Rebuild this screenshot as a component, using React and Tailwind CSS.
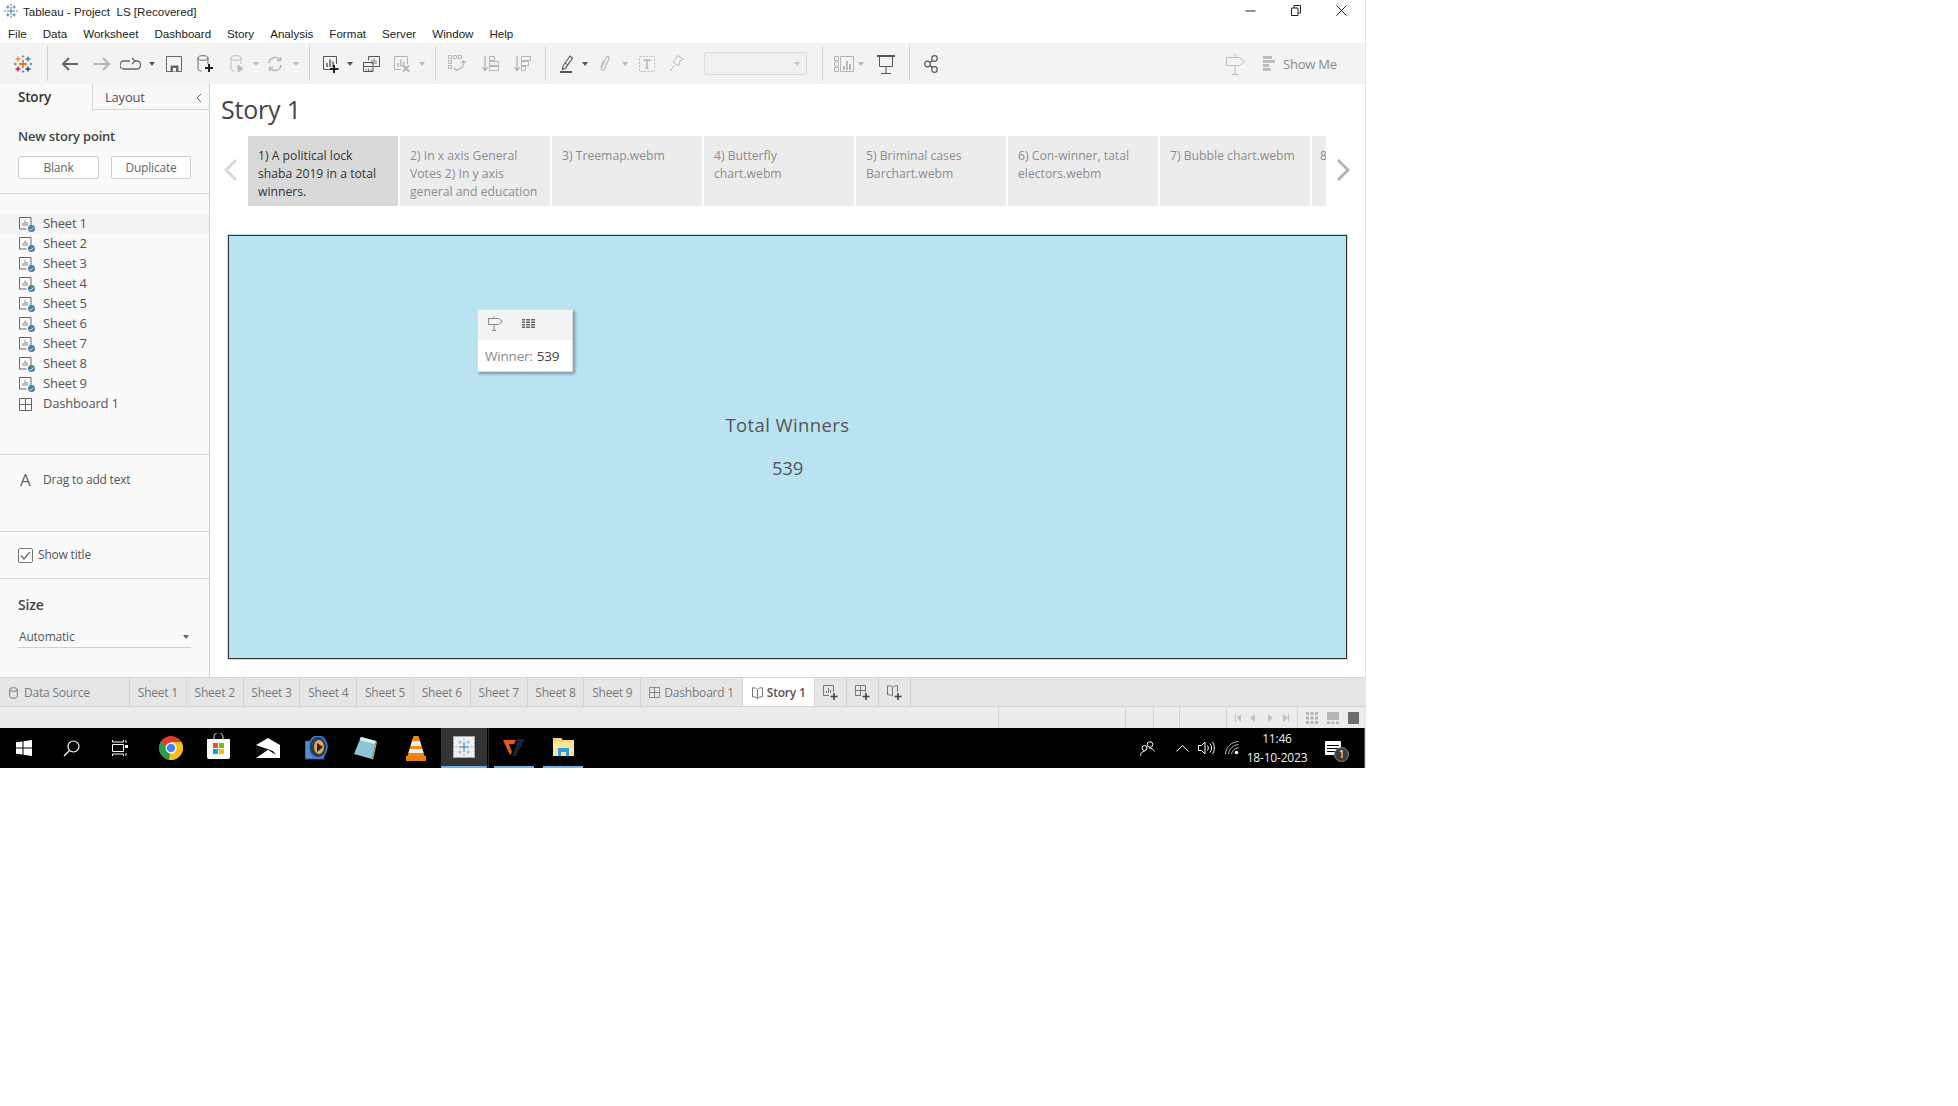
const menuItems = ['File', 'Data', 'Worksheet', 'Dashboard', 'Story', 'Analysis', 'Format', 'Server', 'Window', 'Help'];
const sheets = ['Sheet 1', 'Sheet 2', 'Sheet 3', 'Sheet 4', 'Sheet 5', 'Sheet 6', 'Sheet 7', 'Sheet 8', 'Sheet 9'];

const storyPoints = [
  { text: '1) A political lock\nshaba 2019 in a total\nwinners.', active: true },
  { text: '2) In x axis General\nVotes 2) In y axis\ngeneral and education' },
  { text: '3) Treemap.webm' },
  { text: '4) Butterfly\nchart.webm' },
  { text: '5) Briminal cases\nBarchart.webm' },
  { text: '6) Con-winner, tatal\nelectors.webm' },
  { text: '7) Bubble chart.webm' },
];

// Toolbar bits
const Caret = ({ className = '', color = '#555' }) => (
  <svg width="6" height="4" viewBox="0 0 6 4" className={className}>
    <path d="M0 0h6L3 4z" fill={color} />
  </svg>
);

const Divider = ({ className = '' }) => <div className={`w-px h-[35px] bg-[#d4d4d4] shrink-0 ${className}`} />;

const TableauLogo = ({ className = '' }) => (
  <svg width="18" height="18" viewBox="0 0 18 18" className={className} strokeWidth="1.4" fill="none">
    <path d="M9 5v8M5 9h8" stroke="#e8762b" strokeWidth="1.8" />
    <path d="M4 1.500v5M1.500 4h5" stroke="#f28e2b" />
    <path d="M14 1.500v5M11.500 4h5" stroke="#4e79a7" />
    <path d="M4 11.500v5M1.500 14h5" stroke="#c72035" />
    <path d="M14 11.500v5M11.500 14h5" stroke="#1f447a" />
    <path d="M9 0v3M7.700 1.500h2.600" stroke="#7c9cbf" strokeWidth="1" />
    <path d="M9 15v3M7.700 16.500h2.600" stroke="#6b8db3" strokeWidth="1" />
    <path d="M1 7.700v2.600M0 9h3" stroke="#59879b" strokeWidth="1" />
    <path d="M17 7.700v2.600M15.500 9h2.500" stroke="#59879b" strokeWidth="1" />
  </svg>
);

const ArrowIcon = ({ flip, color, className = '' }) => (
  <svg width="18" height="16" viewBox="0 0 18 16" fill="none" stroke={color} strokeWidth="2" className={className}>
    {flip ? <path d="M1 8h15M10 2l6 6-6 6" /> : <path d="M17 8H2M8 2L2 8l6 6" />}
  </svg>
);

const SheetGlyph = ({ color = '#555' }) => (
  <>
    <path d="M14.500 9V1.500h-13v13H8" stroke={color} fill="none" />
    <path d="M5 12V8M8 12V4.500M11 12V6.500" stroke={color} fill="none" strokeWidth="1.400" />
  </>
);

const SideSheetIcon = () => (
  <span className="relative w-[14px] h-[14px] shrink-0">
    <svg width="13" height="13" viewBox="0 0 13 13" fill="none" stroke="#666">
      <path d="M.5.500h11.500v8M.5.500V12h7" />
      <path d="M4 9V6M6 9V3.500M8 9V5" strokeWidth=".8" />
    </svg>
    <span className="absolute right-[-2px] bottom-[-1px] w-[7px] h-[7px] rounded-full bg-[#3f84a3] flex items-center justify-center">
      <svg width="5" height="4" viewBox="0 0 5 4" fill="none" stroke="#fff" strokeWidth=".8"><path d="M.5 2l1.300 1.300L4.500.5" /></svg>
    </span>
  </span>
);

const GridIcon = ({ color = '#666', size = 13 }) => (
  <svg width={size} height={size} viewBox="0 0 13 13" fill="none" stroke={color}>
    <path d="M.5.500h12v12H.5zM6.500.500v12M.5 6.500h12" />
  </svg>
);

const BookIcon = ({ color = '#666' }) => (
  <svg width="11" height="12" viewBox="0 0 11 12" fill="none" stroke={color} strokeWidth=".9">
    <path d="M5.500 2.500C4.500 1 2.500.8.500.8v9c2 0 4 .2 5 1.700 1-1.500 3-1.700 5-1.700v-9c-2 0-4 .2-5 1.700zM5.500 2.500v9" />
  </svg>
);

const Toolbar = () => (
  <div className="h-[41px] bg-[#f3f3f3] flex items-center shrink-0 pr-[28px]">
    <TableauLogo className="ml-[14px] shrink-0" />
    <Divider className="ml-[15px]" />
    <ArrowIcon color="#666" className="ml-[13px] shrink-0" />
    <ArrowIcon flip color="#b5b5b5" className="ml-[14px] shrink-0" />
    <svg width="24" height="14" viewBox="0 0 24 14" fill="none" stroke="#666" strokeWidth="1.300" className="ml-[9px] shrink-0">
      <path d="M10 4H4a3.500 3.500 0 0 0 0 8h13a3.500 3.500 0 0 0 3.500-3.500V7.500A3.500 3.500 0 0 0 17 4h-3" />
      <path d="M12 1l3 3-3 3" />
    </svg>
    <Caret className="ml-[5px] shrink-0" />
    <svg width="16" height="16" viewBox="0 0 16 16" fill="none" stroke="#666" className="ml-[11px] shrink-0">
      <path d="M.5.500h15v15H.5z" />
      <path d="M5 15.500V10h7v5.500z" fill="#666" />
      <path d="M7 12h3v3.500H7z" fill="#f3f3f3" stroke="none" />
    </svg>
    <svg width="17" height="18" viewBox="0 0 17 18" fill="none" stroke="#666" className="ml-[15px] shrink-0">
      <ellipse cx="6" cy="3" rx="5" ry="2.300" />
      <path d="M1 3v11c0 1 1.500 2 3.500 2M11 3v6" />
      <path d="M12 9v8M8 13h8" stroke="#222" strokeWidth="2" />
    </svg>
    <svg width="14" height="18" viewBox="0 0 14 18" fill="none" stroke="#bbb" className="ml-[16px] shrink-0">
      <ellipse cx="6" cy="3" rx="5" ry="2.300" />
      <path d="M1 3v11c0 1 1.500 2 3.500 2M11 3v6" />
      <path d="M8 10v7l5-3.500z" fill="#bbb" />
    </svg>
    <Caret color="#bbb" className="ml-[9px] shrink-0" />
    <svg width="16" height="16" viewBox="0 0 16 16" fill="none" stroke="#b5b5b5" strokeWidth="1.400" className="ml-[8px] shrink-0">
      <path d="M2 7a6 6 0 0 1 10.500-3.500M14 9a6 6 0 0 1-10.500 3.500" />
      <path d="M13.500 1v3.500H10M2.500 15v-3.500H6" />
    </svg>
    <Caret color="#bbb" className="ml-[10px] shrink-0" />
    <Divider className="ml-[10px]" />
    <svg width="17" height="18" viewBox="0 0 17 18" fill="none" className="ml-[12px] shrink-0">
      <SheetGlyph />
      <path d="M12 10v8M8 14h8.500" stroke="#222" strokeWidth="2" />
    </svg>
    <Caret className="ml-[8px] shrink-0" />
    <svg width="17" height="16" viewBox="0 0 17 16" fill="none" stroke="#555" className="ml-[10px] shrink-0">
      <path d="M5.500 4.500V.5h11v10h-6" />
      <path d="M.5 6.500h9.500v9H.5zM.5 10.500h9.500" />
      <path d="M9 8V4M11 8V2.500M13 8V4.500M3 15v-2M5.500 15v-2.500M8 15v-2" strokeWidth=".8" />
    </svg>
    <svg width="17" height="17" viewBox="0 0 17 17" fill="none" className="ml-[13px] shrink-0">
      <SheetGlyph color="#b5b5b5" />
      <path d="M10 10.500l6 6M16 10.500l-6 6" stroke="#b5b5b5" strokeWidth="2" />
    </svg>
    <Caret color="#bbb" className="ml-[9px] shrink-0" />
    <Divider className="ml-[10px]" />
    <svg width="18" height="17" viewBox="0 0 18 17" fill="none" stroke="#b5b5b5" className="ml-[12px] shrink-0">
      <path d="M.5.500h3v3h-3zM5.500.500h3v3h-3zM10.500.500h3v3h-3zM.5 5.500h3v3h-3zM.5 10.500h3v3h-3z" />
      <path d="M15.500 6c1 4-1 8-7 9M6 13l2.500 2.500L11 14M13 8l2.500-2 2 2" strokeWidth="1.200" />
    </svg>
    <svg width="17" height="17" viewBox="0 0 17 17" fill="none" stroke="#b5b5b5" className="ml-[16px] shrink-0">
      <path d="M3 1v14M.5 12.500L3 15.500l2.500-3" strokeWidth="1.300" />
      <path d="M7.500 1.500h5v4h-5zM7.500 6.500h9v4h-9zM7.500 11.500h9v4h-9z" />
    </svg>
    <svg width="17" height="17" viewBox="0 0 17 17" fill="none" stroke="#b5b5b5" className="ml-[15px] shrink-0">
      <path d="M3 1v14M.5 12.500L3 15.500l2.500-3" strokeWidth="1.300" />
      <path d="M7.500 1.500h9v4h-9zM7.500 6.500h7v4h-7zM7.500 11.500h4v4h-4z" />
    </svg>
    <Divider className="ml-[14px]" />
    <svg width="14" height="18" viewBox="0 0 14 18" fill="none" stroke="#555" className="ml-[14px] shrink-0">
      <path d="M3 11l7-10 2.500 2-7 10-3 1.500z" strokeWidth="1.100" />
      <path d="M5 8l3 2" />
      <path d="M0 17h12" strokeWidth="2" />
    </svg>
    <Caret className="ml-[8px] shrink-0" />
    <svg width="14" height="18" viewBox="0 0 14 18" fill="none" stroke="#bbb" strokeWidth="1.200" className="ml-[10px] shrink-0">
      <path d="M5 6L3 13c-.5 2 2.500 3.500 3.500 1L11 3.500C11.800 1.500 9 .5 8 2.500L3.500 13" />
    </svg>
    <Caret color="#bbb" className="ml-[10px] shrink-0" />
    <svg width="16" height="16" viewBox="0 0 16 16" fill="none" stroke="#bbb" className="ml-[11px] shrink-0">
      <path d="M.5.500h15v15H.5z" strokeDasharray="2 1.500" />
      <path d="M5 5V4h6v1M8 4v8M6.500 12h3" stroke="#999" />
    </svg>
    <svg width="14" height="17" viewBox="0 0 14 17" fill="none" stroke="#bbb" className="ml-[15px] shrink-0">
      <path d="M7.500.5l6 4-3.500 1-1 5-2-.5-4-3 1.500-1.500zM4.500 10L.5 16" />
    </svg>
    <div className="ml-[20px] w-[103px] h-[23px] shrink-0 border border-[#dcdcdc] rounded-[2px] bg-[#f0f0f0] flex items-center justify-end pr-[6px]">
      <Caret color="#c4c4c4" />
    </div>
    <Divider className="ml-[15px]" />
    <svg width="20" height="18" viewBox="0 0 20 18" fill="none" stroke="#b5b5b5" className="ml-[11px] shrink-0">
      <path d="M.5 1.500h4v4h-4zM.5 7h4v4h-4zM.5 12.500h4v4h-4zM6.500 1.500h13v15h-13z" />
      <path d="M10 15v-4M13 15V6M16 15V9" stroke="#999" strokeWidth="1.300" />
    </svg>
    <Caret color="#bbb" className="ml-[4px] shrink-0" />
    <svg width="18" height="20" viewBox="0 0 18 20" fill="none" stroke="#555" className="ml-[13px] shrink-0">
      <path d="M0 2h18" strokeWidth="2" />
      <path d="M2.500 2v10.500h13V2M9 12.500V19M4 19.500h10" />
    </svg>
    <Divider className="ml-[14px]" />
    <svg width="14" height="18" viewBox="0 0 14 18" fill="none" stroke="#555" strokeWidth="1.200" className="ml-[14px] shrink-0">
      <circle cx="3.500" cy="9" r="2.800" />
      <circle cx="10.500" cy="3.500" r="2.800" />
      <circle cx="10.500" cy="14.500" r="2.800" />
      <path d="M6 7.500l2.500-2M6 10.500l2.500 2" />
    </svg>
    <svg width="19" height="22" viewBox="0 0 19 22" fill="none" stroke="#bdbdbd" className="ml-auto shrink-0">
      <path d="M.5 4.500h13l5 4-5 4H.5zM9 .5v4M9 12.500v9M5.500 21.500h7" />
    </svg>
    <svg width="12" height="16" viewBox="0 0 12 16" className="ml-[18px] shrink-0" fill="#bdbdbd">
      <path d="M0 0h9v3H0zM0 4h12v3H0zM0 8h6v3H0zM0 12h8v3H0z" />
    </svg>
    <span className="ml-[8px] w-[54px] pt-[2px] text-[13px] text-[#8a8a8a] whitespace-nowrap tracking-[-0.2px]">Show Me</span>
  </div>
);

const StoryPanel = () => (
  <aside className="w-[210px] shrink-0 bg-[#fafafa] border-r border-[#cfcfcf] flex flex-col text-[#555]">
    <div className="h-[26px] flex text-[13px] shrink-0">
      <div className="w-[92px] pl-[18px] pt-[3px] text-[13.500px] font-semibold text-[#333]">Story</div>
      <div className="flex-1 border-l border-b border-[#d4d4d4] bg-[#f8f8f8] flex items-center justify-between pl-[12px] pr-[7px] pt-[2px]">
        <span>Layout</span>
        <svg width="6" height="10" viewBox="0 0 6 10" fill="none" stroke="#666"><path d="M5 1L1 5l4 4" /></svg>
      </div>
    </div>
    <div className="h-[84px] shrink-0 border-b border-[#d4d4d4] px-[18px] pt-[18px]">
      <div className="text-[13px] font-semibold text-[#444] leading-[17px]">New story point</div>
      <div className="flex justify-between w-[173px] mt-[11px]">
        <button className="w-[81px] h-[23px] border border-[#cfcfcf] rounded-[2px] bg-white text-[12px] text-[#666]">Blank</button>
        <button className="w-[80px] h-[23px] border border-[#cfcfcf] rounded-[2px] bg-white text-[12px] text-[#666]">Duplicate</button>
      </div>
    </div>
    <div className="h-[261px] shrink-0 border-b border-[#d4d4d4] pt-[20px]">
      {sheets.map((s, i) => (
        <div key={s} className={`h-[20px] flex items-center pl-[19px] gap-[10px] text-[13px] ${i === 0 ? 'bg-[#f3f3f3]' : ''}`}>
          <SideSheetIcon />
          <span>{s}</span>
        </div>
      ))}
      <div className="h-[20px] flex items-center pl-[19px] gap-[11px] text-[13px]">
        <GridIcon />
        <span>Dashboard 1</span>
      </div>
    </div>
    <div className="h-[77px] shrink-0 border-b border-[#d4d4d4] pt-[14px] pl-[20px] flex items-start gap-[12px]">
      <span className="text-[17px] leading-[22px] w-[11px] text-[#666]">A</span>
      <span className="text-[12px] leading-[22px]">Drag to add text</span>
    </div>
    <div className="h-[47px] shrink-0 border-b border-[#d4d4d4] pl-[18px] flex items-center gap-[5px]">
      <span className="w-[15px] h-[15px] border border-[#777] rounded-[2px] bg-white flex items-center justify-center">
        <svg width="11" height="9" viewBox="0 0 11 9" fill="none" stroke="#666" strokeWidth="1.200"><path d="M1 4.500L4 8l6-7" /></svg>
      </span>
      <span className="text-[12px]">Show title</span>
    </div>
    <div className="flex-1 pl-[18px] pt-[17px]">
      <div className="text-[14px] font-semibold text-[#444] leading-[18px]">Size</div>
      <div className="w-[173px] h-[24px] mt-[10px] pt-[2px] border-b border-[#cfcfcf] flex items-center justify-between pl-[1px] pr-[2px]">
        <span className="text-[12px]">Automatic</span>
        <Caret color="#666" />
      </div>
    </div>
  </aside>
);

const StoryNav = () => (
  <div className="flex items-center h-[70px] mt-[15px]">
    <div className="w-[38px] shrink-0 flex justify-end pr-[10px] mb-[2px]">
      <svg width="14" height="24" viewBox="0 0 14 24" fill="none" stroke="#d8d8d8" strokeWidth="3"><path d="M12 2L2 12l10 10" /></svg>
    </div>
    <div className="flex gap-[2px] w-[1078px] overflow-hidden shrink-0">
      {storyPoints.map(p => (
        <div
          key={p.text}
          className={`w-[150px] h-[70px] shrink-0 pl-[10px] pt-[11px] text-[12.200px] tracking-normal leading-[18px] whitespace-pre-line overflow-hidden ${
            p.active ? 'bg-[#d9d9d9] text-[#333]' : 'bg-[#ececec] text-[#8c8c8c]'
          }`}
        >
          {p.text}
        </div>
      ))}
      <div className="w-[15px] h-[70px] shrink-0 bg-[#ececec] pl-[8px] pt-[11px] text-[12.200px] leading-[18px] text-[#8c8c8c] overflow-hidden">8</div>
    </div>
    <div className="pl-[10px] mb-[2px]">
      <svg width="14" height="24" viewBox="0 0 14 24" fill="none" stroke="#b5b5b5" strokeWidth="3"><path d="M2 2l10 10L2 22" /></svg>
    </div>
  </div>
);

const StoryCanvas = () => (
  <div className="relative ml-[17px] mt-[28px] w-[1121px] h-[426px] bg-[#bae3f2] p-px">
    <div className="w-full h-full border border-[#333] flex flex-col items-center pt-[177px] text-[#555]">
      <div className="text-[18.500px] leading-[24px] tracking-[0.4px]">Total Winners</div>
      <div className="text-[18.500px] leading-[24px] mt-[19px]">539</div>
    </div>
    {/* hover tooltip */}
    <div className="absolute left-[250px] top-[75px] w-[96px] h-[63px] bg-white shadow-[2px_2px_3px_rgba(0,0,0,0.35)] border border-[#ddd]">
      <div className="h-[30px] bg-[#f3f3f3] flex items-center pl-[10px] pb-[3px] gap-[19px]">
        <svg width="15" height="15" viewBox="0 0 15 15" fill="none" stroke="#888"><path d="M.5 2.500h10l4 3-4 3H.5zM6 .5v2M6 8.500v6M4 14.500h4" /></svg>
        <svg width="13" height="9" viewBox="0 0 13 9" fill="#666"><path d="M0 0h3v1.500H0zM4 0h4v1.500H4zM9 0h4v1.500H9zM0 2.500h3V4H0zM4 2.500h4V4H4zM9 2.500h4V4H9zM0 5h3v1.500H0zM4 5h4v1.500H4zM9 5h4v1.500H9zM0 7.500h3V9H0zM4 7.500h4V9H4zM9 7.500h4V9H9z" /></svg>
      </div>
      <div className="h-[31px] flex items-center pl-[7px] pt-[1px] text-[13.500px] text-[#8a8a8a] whitespace-nowrap">
        Winner:<span className="ml-[4px] text-[#444]">539</span>
      </div>
    </div>
  </div>
);

const TabBar = () => (
  <div className="h-[30px] shrink-0 bg-[#e6e6e6] border-t border-b border-[#d4d4d4] flex text-[12px] text-[#7a7a7a]">
    <div className="w-[130px] border-r border-[#d4d4d4] flex items-center pl-[9px] pt-[1px] gap-[6px] shrink-0">
      <svg width="9" height="12" viewBox="0 0 9 12" fill="none" stroke="#777"><ellipse cx="4.500" cy="2.500" rx="3.800" ry="1.800" /><path d="M.7 2.500v7c0 1 1.500 1.800 3.800 1.800s3.800-.8 3.800-1.800v-7" /></svg>
      <span>Data Source</span>
    </div>
    {sheets.map(s => (
      <div key={s} className="w-[56.800px] border-r border-[#d4d4d4] flex items-center justify-center pt-[1px] shrink-0">{s}</div>
    ))}
    <div className="w-[102px] border-r border-[#d4d4d4] flex items-center justify-center pt-[1px] gap-[4px] shrink-0">
      <GridIcon color="#777" size={11} />
      <span>Dashboard 1</span>
    </div>
    <div className="w-[72px] bg-white border-r border-[#d4d4d4] flex items-center justify-center pt-[1px] gap-[4px] text-[#555] font-semibold shrink-0">
      <BookIcon />
      <span>Story 1</span>
    </div>
    {['sheet', 'dash', 'story'].map(k => (
      <div key={k} className="w-[32px] border-r border-[#d4d4d4] flex items-center justify-center shrink-0">
        <svg width="15" height="15" viewBox="0 0 15 15" fill="none" stroke="#777">
          {k === 'sheet' && <path d="M10.500 7V.5H.5v10h5.500M3.500 8V6M5.500 8V3M7.500 8V5" />}
          {k === 'dash' && <path d="M10.500 7V.5H.5v10h5.500M5.500.5v10M.5 5.500h10" />}
          {k === 'story' && <path d="M5.500 2C4.500 1 2.500.8.500.8v9c2 0 4 .2 5 1.200M5.500 2c1-1 3-1.200 5-1.200V7M5.500 2v9" />}
          <path d="M11 8v7M7.500 11.500h7" stroke="#444" strokeWidth="1.600" />
        </svg>
      </div>
    ))}
  </div>
);

const StatusBar = () => (
  <div className="h-[21px] shrink-0 bg-[#ececec] flex">
    <div className="w-[999px] border-r border-[#d4d4d4] shrink-0" />
    <div className="w-[127px] border-r border-[#d4d4d4] shrink-0" />
    <div className="w-[28px] border-r border-[#d4d4d4] shrink-0" />
    <div className="w-[26px] border-r border-[#d4d4d4] shrink-0" />
    <div className="w-[47px] border-r border-[#d4d4d4] shrink-0" />
    <div className="w-[71px] border-r border-[#d4d4d4] flex items-center justify-center shrink-0">
      <svg width="54" height="8" viewBox="0 0 54 8" fill="#c2c2c2">
        <path d="M0 0h1v8H0zM6 0v8L2 4zM20 0v8l-5-4zM33 0v8l5-4zM48 0v8l5-4zM53 0h1v8h-1z" />
      </svg>
    </div>
    <div className="flex items-center pl-[8px] gap-[9px]">
      <svg width="12" height="12" viewBox="0 0 12 12" fill="#b5b5b5"><path d="M0 0h3v3H0zM4.500 0h3v3h-3zM9 0h3v3H9zM0 4.500h3v3H0zM4.500 4.500h3v3h-3zM9 4.500h3v3H9zM0 9h3v3H0zM4.500 9h3v3h-3zM9 9h3v3H9z" /></svg>
      <svg width="12" height="12" viewBox="0 0 12 12" fill="#b5b5b5"><path d="M0 0h12v8H0zM0 9.500h3V12H0zM4.500 9.500h3V12h-3zM9 9.500h3V12H9z" /></svg>
      <div className="w-[11px] h-[12px] bg-[#6f6f6f]" />
    </div>
  </div>
);

const Taskbar = () => (
  <div className="h-[40px] shrink-0 bg-black flex items-center text-white relative">
    <svg width="16" height="16" viewBox="0 0 16 16" fill="#fff" className="ml-[16px] shrink-0">
      <path d="M0 2.300L6.500 1.400v6.100H0zM7.500 1.200L16 0v7.500H7.500zM0 8.500h6.500v6.100L0 13.700zM7.500 8.500H16V16l-8.500-1.200z" />
    </svg>
    <svg width="17" height="17" viewBox="0 0 17 17" fill="none" stroke="#fff" strokeWidth="1.200" className="ml-[31px] shrink-0">
      <circle cx="10.500" cy="6.500" r="5.500" />
      <path d="M6.500 10.500L1 16" />
    </svg>
    <svg width="16" height="16" viewBox="0 0 16 16" fill="none" stroke="#fff" className="ml-[32px] shrink-0">
      <path d="M.5 0v2h11V0M.5 4.500h11v7H.5zM.5 16v-2h11v2M14 0v3M14 13v3" />
      <path d="M13 5h3v3h-3z" fill="#fff" stroke="none" />
    </svg>
    <svg width="24" height="24" viewBox="0 0 24 24" className="ml-[31px] shrink-0">
      <circle cx="12" cy="12" r="12" fill="#e33b2e" />
      <path d="M12 12L1.600 6A12 12 0 0 0 10 23.800z" fill="#2a9d4a" />
      <path d="M12 6h10.400A12 12 0 0 1 10 23.800L12 12z" fill="#f9c21a" />
      <circle cx="12" cy="12" r="5.500" fill="#fff" />
      <circle cx="12" cy="12" r="4.300" fill="#4285f4" />
    </svg>
    <svg width="23" height="26" viewBox="0 0 23 26" className="ml-[24px] shrink-0 mb-[4px]" fill="none">
      <path d="M7 6V4a4.500 4.500 0 0 1 9 0v2" stroke="#ddd" />
      <path d="M0 6h23v18a2 2 0 0 1-2 2H2a2 2 0 0 1-2-2z" fill="#fff" />
      <path d="M6 10h5v5H6z" fill="#f25022" />
      <path d="M12 10h5v5h-5z" fill="#7fba00" />
      <path d="M6 16h5v5H6z" fill="#00a4ef" />
      <path d="M12 16h5v5h-5z" fill="#ffb900" />
    </svg>
    <svg width="24" height="20" viewBox="0 0 24 20" className="ml-[26px] shrink-0">
      <path d="M0 7L12 0l12 7v13H0z" fill="#fff" />
      <path d="M0 7l17 6 3 4-8-5-12 8z" fill="#000" opacity=".95" />
      <path d="M3 19l9-7 10 7z" fill="#fff" />
    </svg>
    <svg width="23" height="24" viewBox="0 0 23 24" className="ml-[25px] shrink-0">
      <rect x="0" y="5" width="19" height="18" fill="#5b8ec9" stroke="#2b3fb0" />
      <ellipse cx="13" cy="11" rx="9" ry="11" fill="#26404f" stroke="#3f7fd0" strokeWidth="1.500" />
      <ellipse cx="14" cy="11" rx="5" ry="7" fill="#e3a85c" />
      <path d="M12 7l6 4-6 5z" fill="#30200f" />
    </svg>
    <svg width="23" height="24" viewBox="0 0 23 24" className="ml-[26px] shrink-0">
      <path d="M7 1l15 4-4 18L0 18z" fill="#8cc5d4" />
      <path d="M7 1l15 4-1 3L5.500 4z" fill="#dff0f4" />
      <path d="M22 5l1 1-4 18-1-1z" fill="#c8a86a" />
    </svg>
    <svg width="20" height="25" viewBox="0 0 20 25" className="ml-[29px] shrink-0">
      <path d="M7.500 0h5L19 21H1z" fill="#f08a12" />
      <path d="M6 5h8l1.300 5H4.700zM3.500 13h13l1 4h-15z" fill="#eee" />
      <path d="M0 20h20v5H0z" fill="#e87f06" />
    </svg>
    <div className="ml-[15px] w-[46px] h-[40px] bg-[#333] shrink-0 flex items-center justify-center border-b-[2px] border-[#6fb2e4]">
      <span className="w-[22px] h-[22px] bg-[#f1f1f1] border border-[#aaa] flex items-center justify-center">
        <svg width="18" height="18" viewBox="0 0 18 18" fill="none" stroke="#5b9fd1">
          <path d="M9 4v10M4 9h10" strokeWidth="1.400" />
          <path d="M5 2v4M3 4h4M13 2v4M11 4h4M5 12v4M3 14h4M13 12v4M11 14h4M9 0v2.500M9 15.500V18M0 9h2.500M15.500 9H18" opacity=".6" />
        </svg>
      </span>
    </div>
    <div className="w-[1px] h-[40px] bg-[#2a2a2a] ml-[1px] shrink-0" />
    <div className="ml-[5px] w-[40px] h-[40px] flex items-center justify-center border-b-[2px] border-[#6fb2e4] shrink-0">
      <svg width="22" height="18" viewBox="0 0 22 18">
        <path d="M0 2h13l-2 4H6l3 8-2 3z" fill="#e8591c" />
        <path d="M15 1h7L13 18H9z" fill="#16243c" />
      </svg>
    </div>
    <div className="ml-[9px] w-[40px] h-[40px] flex items-center justify-center border-b-[2px] border-[#6fb2e4] shrink-0">
      <svg width="21" height="18" viewBox="0 0 21 18">
        <path d="M0 0h8l2 2h11v16H0z" fill="#f7d774" />
        <path d="M0 4h21v14H0z" fill="#fbe59a" />
        <path d="M5 10h11v8h-3v-4H8v4H5z" fill="#2aa3dc" />
      </svg>
    </div>
    <div className="ml-auto flex items-center shrink-0">
      <svg width="15" height="15" viewBox="0 0 15 15" fill="none" stroke="#fff">
        <circle cx="10" cy="3.500" r="2.800" />
        <circle cx="4.500" cy="7" r="2.500" />
        <path d="M.5 14.500c0-2.500 1.500-4 4-4M9 7c2.500 0 4.500 1.500 5.500 3.500" />
      </svg>
      <svg width="13" height="8" viewBox="0 0 13 8" fill="none" stroke="#fff" className="ml-[21px]"><path d="M.5 7.500l6-6 6 6" /></svg>
      <svg width="17" height="14" viewBox="0 0 17 14" fill="none" stroke="#fff" className="ml-[9px]">
        <path d="M.5 4.500h3l3.500-3.500v12l-3.500-3.500h-3zM9.500 4.500c1 1.500 1 3.500 0 5M12 2.500c2 2.500 2 6.500 0 9M14.500 1c2.500 3.500 2.500 8.500 0 12" />
      </svg>
      <svg width="14" height="14" viewBox="0 0 14 14" fill="none" stroke="#bbb" className="ml-[10px]">
        <path d="M.5 13C1 6 6 1 13.500.5M3.500 13C4 8 8 4 13.500 3.500M6.500 13C7 10 10 7 13.500 6.500" />
        <circle cx="11.500" cy="11.500" r="1.800" fill="#fff" stroke="none" />
      </svg>
      <div className="w-[74px] ml-[1px] text-center text-[12px] leading-[19px] text-[#eee]">
        <div>11:46</div>
        <div>18-10-2023</div>
      </div>
      <span className="relative ml-[11px] w-[16px] h-[14px] mr-[24px] bg-white rounded-[1px] flex flex-col gap-[2px] justify-center pl-[2px]">
        <i className="block w-[12px] h-px bg-black" />
        <i className="block w-[12px] h-px bg-black" />
        <i className="block w-[8px] h-px bg-black" />
        <span className="absolute left-[9px] top-[6px] w-[15px] h-[15px] rounded-full bg-[#3c3c3c] border border-[#888] flex items-center justify-center text-[11px] text-white not-italic">1</span>
      </span>
    </div>
    <div className="absolute right-0 top-0 w-px h-[40px] bg-[#555]" />
  </div>
);

export default function App() {
  return (
    <div className="w-[1958px] h-[1106px] bg-white font-['Open_Sans',sans-serif] tracking-[-0.2px] overflow-hidden">
      <div className="w-[1366px] h-[768px] flex flex-col border-r border-[#e4e4e4]">
        {/* Title bar */}
        <div className="h-[22px] shrink-0 flex items-center pl-[4px] font-['Liberation_Sans',sans-serif] tracking-normal">
          <svg width="14" height="14" viewBox="0 0 18 18" fill="none" stroke="#4a7ea8" strokeWidth="1.300">
            <path d="M9 4v10M4 9h10M5 2v4M3 4h4M13 2v4M11 4h4M5 12v4M3 14h4M13 12v4M11 14h4M9 0v2.500M9 15.500V18M0 9h2.500M15.500 9H18" />
          </svg>
          <span className="ml-[5px] pt-[2px] text-[11.600px] text-[#222] whitespace-nowrap">Tableau - Project&nbsp; LS [Recovered]</span>
          <div className="ml-auto flex items-center gap-[35px] pr-[18px] mb-[2px]">
            <svg width="11" height="11" viewBox="0 0 11 11" stroke="#222" fill="none"><path d="M.5 6h10" /></svg>
            <svg width="10" height="11" viewBox="0 0 10 11" stroke="#222" fill="none"><path d="M.5 3h6.500v7.500H.5zM3 3V.5h6.500V8H7" /></svg>
            <svg width="11" height="11" viewBox="0 0 11 11" stroke="#222" fill="none"><path d="M.5.5l10 10M10.500.5l-10 10" /></svg>
          </div>
        </div>
        {/* Menu */}
        <div className="h-[21px] shrink-0 flex items-center gap-[16px] pl-[8px] pt-[2px] text-[11.600px] text-[#222] font-['Liberation_Sans',sans-serif] tracking-normal">
          {menuItems.map(m => <span key={m}>{m}</span>)}
        </div>
        <Toolbar />
        <div className="flex-1 min-h-0 flex">
          <StoryPanel />
          <main className="flex-1 min-w-0 flex flex-col overflow-hidden">
            <h1 className="pl-[11px] pt-[9px] text-[25px] leading-[33px] h-[37px] text-[#444] font-normal">Story 1</h1>
            <StoryNav />
            <StoryCanvas />
          </main>
        </div>
        <TabBar />
        <StatusBar />
        <Taskbar />
      </div>
    </div>
  );
}
